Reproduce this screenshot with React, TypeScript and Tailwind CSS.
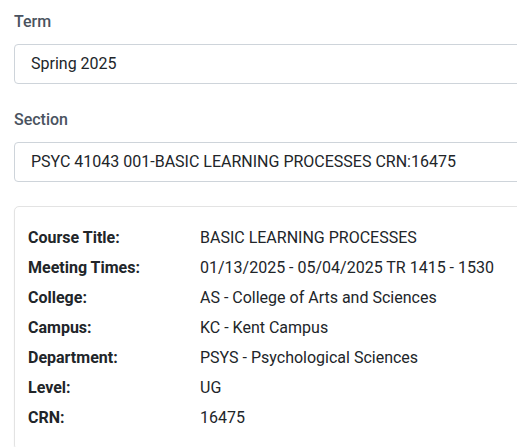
import React from 'react';

const details = [
    { label: 'Course Title:', value: 'BASIC LEARNING PROCESSES' },
    { label: 'Meeting Times:', value: '01/13/2025 - 05/04/2025 TR 1415 - 1530' },
    { label: 'College:', value: 'AS - College of Arts and Sciences' },
    { label: 'Campus:', value: 'KC - Kent Campus' },
    { label: 'Department:', value: 'PSYS - Psychological Sciences' },
    { label: 'Level:', value: 'UG' },
    { label: 'CRN:', value: '16475' },
];

function Field({ label, value }: { label: string; value: string }) {
    return (
        <div className="flex flex-col">
            <label className="text-[16px] leading-6 font-medium text-[#4a5360] mb-[10px]">{label}</label>
            <div className="h-10 flex items-center px-4 border border-[#ced4da] rounded-[4px] bg-white text-[16px] text-[#212529]">
                {value}
            </div>
        </div>
    );
}

export default function App() {
    return (
        <div className="w-[517px] h-[447px] overflow-hidden bg-white" style={{ fontFamily: 'Roboto, "Liberation Sans", sans-serif' }}>
            <div className="w-[560px] pl-[14px] pt-[10px] flex flex-col gap-6">
                <Field label="Term" value="Spring 2025" />
                <Field label="Section" value="PSYC 41043 001-BASIC LEARNING PROCESSES CRN:16475" />

                {/* Course details */}
                <div className="border border-[#e3e3e3] rounded-[5px] shadow-[0_1px_2px_rgba(0,0,0,0.06)] pl-[13px] pt-[16px] pb-4">
                    <div className="grid grid-cols-[172px_1fr]">
                        {details.map((d) => (
                            <React.Fragment key={d.label}>
                                <div className="text-[16px] leading-[30px] font-bold text-[#212529]">{d.label}</div>
                                <div className="text-[16px] leading-[30px] text-[#212529] whitespace-nowrap">{d.value}</div>
                            </React.Fragment>
                        ))}
                    </div>
                </div>
            </div>
        </div>
    );
}
